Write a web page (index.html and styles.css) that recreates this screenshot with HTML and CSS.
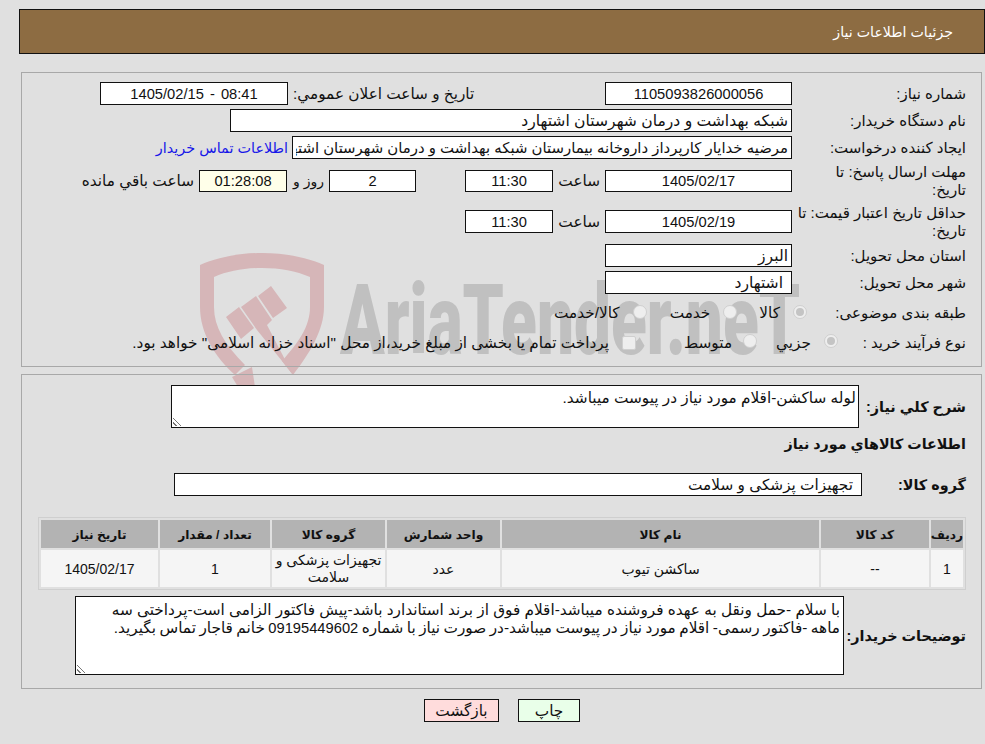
FILE: index.html
```html
<!DOCTYPE html>
<html lang="fa" dir="rtl">
<head>
<meta charset="utf-8">
<title>جزئیات اطلاعات نیاز</title>
<link rel="stylesheet" href="styles.css">
</head>
<body>
<svg class="mark" viewBox="0 0 140 145" aria-hidden="true">
  <path class="mark-red" d="M67 8C92 8 113 13 129 20V62C129 85 115 108 98 130L87 116C103 98 115 82 115 62V32C101 26 85 23 67 23C49 23 33 26 19 32V62C19 82 30 100 50 120L40 130C20 112 5 88 5 62V20C21 13 42 8 67 8Z"/>
  <path class="mark-red" d="M31 72L44 62L59 83L46 94ZM46 62L61 51L77 75L72 80L98 130L87 116L62 85ZM63 51L76 41L92 63L78 73Z"/>
  <path class="mark-red" d="M37 132L57 122L60 142L43 142Z"/>
</svg>
<div class="wordmark" aria-hidden="true">AriaTender.neT</div>
<div class="page">
  <header class="title-bar">جزئیات اطلاعات نیاز</header>

  <section class="panel top-panel">
    <div class="row r1">
      <div class="lab">شماره نیاز:</div>
      <div class="box b-main num">1105093826000056</div>
      <div class="lab-inline pub">تاریخ و ساعت اعلان عمومي:</div>
      <div class="box b-pub num" dir="ltr">1405/02/15 - 08:41</div>
    </div>
    <div class="row r2">
      <div class="lab">نام دستگاه خریدار:</div>
      <div class="box b-wide txt">شبکه بهداشت و درمان شهرستان اشتهارد</div>
    </div>
    <div class="row r3">
      <div class="lab">ایجاد کننده درخواست:</div>
      <input class="box b-creator txt" type="text" readonly value="مرضیه خدایار کارپرداز داروخانه بیمارستان شبکه بهداشت و درمان شهرستان اشتهارد">
      <a class="contact" href="#">اطلاعات تماس خریدار</a>
    </div>
    <div class="row r4">
      <div class="lab lab-two">مهلت ارسال پاسخ: تا<br>تاریخ:</div>
      <div class="box b-main num">1405/02/17</div>
      <div class="lab-inline hour">ساعت</div>
      <div class="box b-time num">11:30</div>
      <div class="box b-days num">2</div>
      <div class="lab-inline days">روز و</div>
      <div class="box b-left num">01:28:08</div>
      <div class="lab-inline remain">ساعت باقي مانده</div>
    </div>
    <div class="row r5">
      <div class="lab lab-two">حداقل تاریخ اعتبار قیمت: تا<br>تاریخ:</div>
      <div class="box b-main num">1405/02/19</div>
      <div class="lab-inline hour">ساعت</div>
      <div class="box b-time num">11:30</div>
    </div>
    <div class="row r6">
      <div class="lab">استان محل تحویل:</div>
      <div class="box b-main txt">البرز</div>
    </div>
    <div class="row r7">
      <div class="lab">شهر محل تحویل:</div>
      <div class="box b-main txt indent">اشتهارد</div>
    </div>
    <div class="row r8">
      <div class="lab">طبقه بندی موضوعی:</div>
      <div class="radios">
        <span class="radio on"></span><span class="opt o1">کالا</span>
        <span class="radio"></span><span class="opt o2">خدمت</span>
        <span class="radio"></span><span class="opt">کالا/خدمت</span>
      </div>
    </div>
    <div class="row r9">
      <div class="lab">نوع فرآیند خرید :</div>
      <div class="radios">
        <span class="radio on"></span><span class="opt o3">جزيي</span>
        <span class="radio"></span><span class="opt o4">متوسط</span>
        <span class="check"></span><span class="opt">پرداخت تمام یا بخشی از مبلغ خرید،از محل "اسناد خزانه اسلامی" خواهد بود.</span>
      </div>
    </div>
  </section>

  <section class="panel bottom-panel">
    <div class="row s1">
      <div class="lab-b l1">شرح كلي نیاز:</div>
      <div class="box area a1">لوله ساکشن-اقلام مورد نیاز در پیوست میباشد.<span class="grip"></span></div>
    </div>
    <h2 class="sub">اطلاعات کالاهاي مورد نیاز</h2>
    <div class="row s2">
      <div class="lab-b l2">گروه کالا:</div>
      <div class="box group">تجهیزات پزشکی و سلامت</div>
    </div>
    <table class="items">
      <thead>
        <tr><th class="c1">ردیف</th><th class="c2">کد کالا</th><th class="c3">نام کالا</th><th class="c4">واحد شمارش</th><th class="c5">گروه کالا</th><th class="c6">تعداد / مقدار</th><th class="c7">تاریخ نیاز</th></tr>
      </thead>
      <tbody>
        <tr><td>1</td><td>--</td><td>ساکشن تیوب</td><td>عدد</td><td>تجهیزات پزشکی و سلامت</td><td>1</td><td>1405/02/17</td></tr>
      </tbody>
    </table>
    <div class="row s3">
      <div class="lab-b l3">توضیحات خریدار:</div>
      <div class="box area a2">با سلام -حمل ونقل به عهده فروشنده میباشد-اقلام فوق از برند استاندارد باشد-پیش فاکتور الزامی است-پرداختی سه <span class="tight">ماهه -فاکتور رسمی- اقلام مورد نیاز در پیوست میباشد-در صورت نیاز با شماره <span class="phone">09195449602</span> خانم قاجار تماس بگیرید.</span><span class="grip"></span></div>
    </div>
  </section>

  <div class="actions">
    <button class="btn print" type="button">چاپ</button>
    <button class="btn back" type="button">بازگشت</button>
  </div>
</div>
</body>
</html>
```
FILE: styles.css
```css
* { box-sizing: border-box; }
html, body { margin: 0; height: 744px; overflow: hidden; }
body {
  position: relative;
  background: #e0e0e0;
  color: #111;
  font-family: "Liberation Sans", "DejaVu Sans", sans-serif;
  font-size: 15.3px;
}
.page { position: relative; padding: 9px 0 0 19px; }
.title-bar {
  height: 45px;
  background: #8d6c42;
  border: 1px solid #111;
  color: #fff;
  font-size: 14.2px;
  padding: 1px 31px 0 0;
  display: flex;
  align-items: center;
}
.panel {
  position: relative;
  border: 1px solid #a8a8a8;
  margin: 0 3px 0 2px;
}
.top-panel { margin-top: 18px; height: 295px; padding-top: 7px; }
.bottom-panel { margin-top: 7px; height: 315px; padding-top: 10px; }
.mark { position: absolute; left: 195px; top: 245px; width: 140px; height: 145px; }
.mark-red { fill: #d6b6b8; }
.wordmark {
  position: absolute; left: 340px; top: 262px;
  direction: ltr; white-space: nowrap;
  font-family: Roboto, sans-serif; font-weight: 900; font-size: 98px; line-height: 118px;
  color: #c0c0c0; transform: scaleX(.67); transform-origin: left top;
}
.row { position: relative; display: flex; align-items: center; }
.lab { width: 189px; padding-right: 15px; text-align: right; flex: none; font-size: 15px; white-space: nowrap; }
.lab-two { line-height: 18px; }
.lab-inline { flex: none; }
.box {
  flex: none;
  height: 23px;
  border: 1px solid #111;
  background: #fff;
  white-space: nowrap;
  overflow: hidden;
}
.num { display: flex; align-items: center; justify-content: center; font-size: 14.7px; }
.b-pub { word-spacing: 2px; }
.txt { padding: 0 3px; line-height: 21px; font-size: 15.6px; }
input.txt { font-family: inherit; font-size: 14.9px; color: inherit; outline: 0; }
.indent { padding-right: 8px; }
.b-main { width: 187px; }
.r1, .r2, .r3, .r6, .r7 { height: 27px; }
.r4 { height: 40px; }
.r4 .box { height: 22px; }
.r5 { height: 40px; padding-top: 1px; }
.r6 { margin-top: 1px; }
.pub { width: 317px; padding-left: 5px; text-align: left; }
.b-pub { width: 188px; }
.b-wide { width: 562px; }
.b-creator { width: 500px; }
.contact { color: #1717e8; text-decoration: none; margin-right: 4px; white-space: nowrap; font-size: 14.4px; }
.hour { width: 52px; padding-right: 5px; }
.b-time { width: 88px; }
.b-days { width: 87px; margin-right: 49px; }
.days { width: 42px; padding-right: 5px; font-size: 14px; }
.b-left { width: 88px; background: #ffffe9; }
.remain { padding-right: 5px; }
.r8 { height: 31px; padding-top: 3px; }
.r9 { height: 29px; padding-top: 2px; }
.radios { display: flex; align-items: center; position: relative; white-space: nowrap; }
.radio {
  flex: none; width: 14px; height: 14px; border-radius: 50%;
  border: 1px solid #cfcfcf; background: #eeeeee; position: relative; margin-top: -3px;
}
.radio.on::after { content: ""; position: absolute; inset: 2px; border-radius: 50%; background: #c4c4c4; }
.check { flex: none; width: 14px; height: 14px; border: 1px solid #cfcfcf; background: #eeeeee; border-radius: 2px; }
.r8 .radios { margin-right: -15px; }
.r9 .radios { margin-right: -46px; }
.opt { margin-right: 13px; }
.o1 { margin-left: 22px; }
.o2 { margin-left: 23px; }
.o3 { margin-left: 19px; }
.o4 { margin-left: 48px; margin-right: 11px; }
.lab-b { font-weight: 700; flex: none; font-size: 14.4px; white-space: nowrap; }
.l1 { width: 122px; padding-right: 15px; }
.l2 { width: 119px; padding-right: 15px; }
.l3 { width: 137px; padding-right: 15px; }
.s1 { align-items: center; height: 43px; }
.area {
  white-space: normal; position: relative; padding: 4px 3px 0; line-height: 18px; overflow: hidden;
}
.a1 { width: 688px; height: 43px; padding: 3px 2px 0; }
.a2 { width: 769px; height: 79px; }
.tight { word-spacing: -.8px; }
.phone { font-size: 14.7px; }
.grip {
  position: absolute; left: 1px; bottom: 1px; width: 10px; height: 10px;
  background: repeating-linear-gradient(45deg, transparent 0 2px, #777 2px 3px);
  clip-path: polygon(0 0, 100% 100%, 0 100%);
}
.sub { font-size: 14.3px; font-weight: 700; margin: 6px 15px 0 0; height: 39px; line-height: 20px; }
.s2 { height: 23px; }
.group { width: 688px; padding: 0 8px; line-height: 22px; }
.items {
  margin: 21px 15px 0 0;
  width: 928px;
  border: 1px solid #cfcfcf;
  border-spacing: 2px;
  table-layout: fixed;
  background: #e0e0e0;
}
.items th { background: #b3b3b3; height: 28px; padding: 1px 0 0; font-size: 12.2px; font-weight: 700; }
.items td { background: #f5f5f5; height: 37px; text-align: center; padding: 1px 2px 0; line-height: 17px; font-size: 14px; }
.c1 { width: 32px; } .c2 { width: 108px; } .c3 { width: 317px; } .c4 { width: 113px; } .c5 { width: 113px; } .c6 { width: 110px; } .c7 { width: 117px; }
.s3 { margin-top: 6px; height: 79px; }
.actions { display: flex; gap: 19px; margin: 10px 405px 0 0; }
.btn { height: 23px; border: 1px solid #111; font: inherit; padding: 0; color: #111; }
.print { width: 62px; background: #e9ffe9; }
.back { width: 75px; background: #ffdcdc; }
```
